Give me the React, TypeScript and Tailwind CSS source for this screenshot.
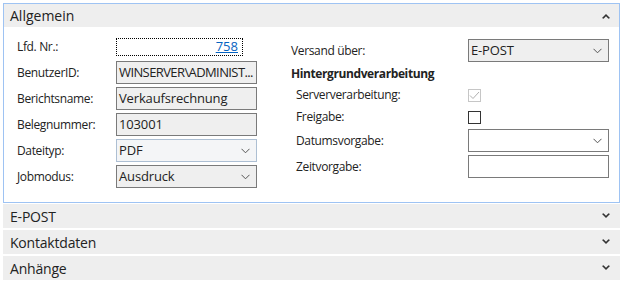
import React from "react";

const font = { fontFamily: '"Open Sans", "Noto Sans", sans-serif' };

function ChevronDownThin() {
  return (
    <svg width="9" height="6" viewBox="0 0 9 6" className="shrink-0">
      <path d="M0.5 0.8 L4.5 4.8 L8.5 0.8" fill="none" stroke="#555" strokeWidth="1" />
    </svg>
  );
}

function ChevronBold({ up }: { up?: boolean }) {
  return (
    <svg width="8" height="6" viewBox="0 0 8 6" className="shrink-0">
      {up ? (
        <path d="M0 5 L4 1 L8 5 L6.5 5.8 L4 3.3 L1.5 5.8 Z" fill="#333" />
      ) : (
        <path d="M0 1 L4 5 L8 1 L6.5 0.2 L4 2.7 L1.5 0.2 Z" fill="#333" />
      )}
    </svg>
  );
}

function Label({ children }: { children: React.ReactNode }) {
  return <div className="w-[99px] shrink-0 text-[12px] tracking-[-0.35px] text-[#222]">{children}</div>;
}

function GrayBox({ children, tight }: { children: React.ReactNode; tight?: boolean }) {
  return (
    <div
      className={`w-[141px] h-[23px] border border-[#7a7a7a] bg-[#efefef] flex items-center pl-[2px] text-[13px] text-[#222] whitespace-nowrap overflow-hidden ${
        tight ? "tracking-[-0.6px]" : "tracking-[-0.15px]"
      }`}
    >
      {children}
    </div>
  );
}

function SelectBox({ value, focused, white }: { value?: string; focused?: boolean; white?: boolean }) {
  return (
    <div
      className={`w-[141px] h-[23px] border flex items-center justify-between pl-[2px] pr-[6px] text-[13px] tracking-[-0.15px] text-[#222] ${
        focused ? "border-[#adbfd3] bg-[#f4f5f7]" : white ? "border-[#7a7a7a] bg-white" : "border-[#7a7a7a] bg-[#efefef]"
      }`}
    >
      <span>{value}</span>
      <ChevronDownThin />
    </div>
  );
}

function Collapsed({ title }: { title: string }) {
  return (
    <div className="h-[24px] bg-[#eeeeee] flex items-center justify-between pl-[7px] pr-[10px] text-[14px] tracking-[-0.2px] text-[#222]">
      <span>{title}</span>
      <ChevronBold />
    </div>
  );
}

const RightLabel = ({ children }: { children: React.ReactNode }) => (
  <div className="w-[177px] pl-[5px] text-[12px] tracking-[-0.35px] text-[#222]">{children}</div>
);

export default function App() {
  return (
    <div className="w-[623px] h-[284px] bg-white" style={font}>
      <div className="pt-[3px] pl-[3px] w-[620px]">
        <div className="border border-[#9ec3f3] bg-white h-[200px]">
          <div className="h-[23px] bg-[#eeeeee] flex items-center justify-between pl-[6px] pr-[9px] text-[14px] text-[#222]">
            <span>Allgemein</span>
            <ChevronBold up />
          </div>
          <div className="flex">
            <div className="flex flex-col gap-[3px] pt-[8px] pl-[13px]">
              <div className="h-[23px] flex items-center">
                <Label>Lfd. Nr.:</Label>
                <div className="w-[127px] h-[18px] border border-dotted border-black flex items-center justify-end pr-[4px] text-[13px]">
                  <span className="text-[#0563c1] underline">758</span>
                </div>
              </div>
              <div className="h-[23px] flex items-center">
                <Label>BenutzerID:</Label>
                <GrayBox tight>WINSERVER\ADMINIST...</GrayBox>
              </div>
              <div className="h-[23px] flex items-center">
                <Label>Berichtsname:</Label>
                <GrayBox>Verkaufsrechnung</GrayBox>
              </div>
              <div className="h-[23px] flex items-center">
                <Label>Belegnummer:</Label>
                <GrayBox>103001</GrayBox>
              </div>
              <div className="h-[23px] flex items-center">
                <Label>Dateityp:</Label>
                <SelectBox value="PDF" focused />
              </div>
              <div className="h-[23px] flex items-center">
                <Label>Jobmodus:</Label>
                <SelectBox value="Ausdruck" />
              </div>
            </div>
            <div className="flex flex-col pt-[12px] pl-[34px]">
              <div className="h-[23px] flex items-center">
                <div className="w-[177px] text-[12px] tracking-[-0.35px] text-[#222]">Versand über:</div>
                <SelectBox value="E-POST" />
              </div>
              <div className="mt-[2px] h-[20px] flex items-center text-[12px] tracking-[-0.4px] font-bold text-[#222]">
                Hintergrundverarbeitung
              </div>
              <div className="h-[22px] flex items-center">
                <RightLabel>Serververarbeitung:</RightLabel>
                <div className="w-[13px] h-[13px] border border-[#c6c6c6] flex items-center justify-center">
                  <svg width="11" height="9" viewBox="0 0 11 9">
                    <path d="M1 4.5 L4 7.5 L10 1" fill="none" stroke="#b0b0b0" strokeWidth="1" />
                  </svg>
                </div>
              </div>
              <div className="h-[22px] flex items-center">
                <RightLabel>Freigabe:</RightLabel>
                <div className="w-[13px] h-[13px] border border-[#333] bg-white" />
              </div>
              <div className="mt-[1px] h-[23px] flex items-center">
                <RightLabel>Datumsvorgabe:</RightLabel>
                <SelectBox white />
              </div>
              <div className="mt-[3px] h-[23px] flex items-center">
                <RightLabel>Zeitvorgabe:</RightLabel>
                <div className="w-[141px] h-[23px] border border-[#7a7a7a] bg-white" />
              </div>
            </div>
          </div>
        </div>
        <div className="mt-[1px] flex flex-col gap-[2px]">
          <Collapsed title="E-POST" />
          <Collapsed title="Kontaktdaten" />
          <Collapsed title="Anhänge" />
        </div>
      </div>
    </div>
  );
}
